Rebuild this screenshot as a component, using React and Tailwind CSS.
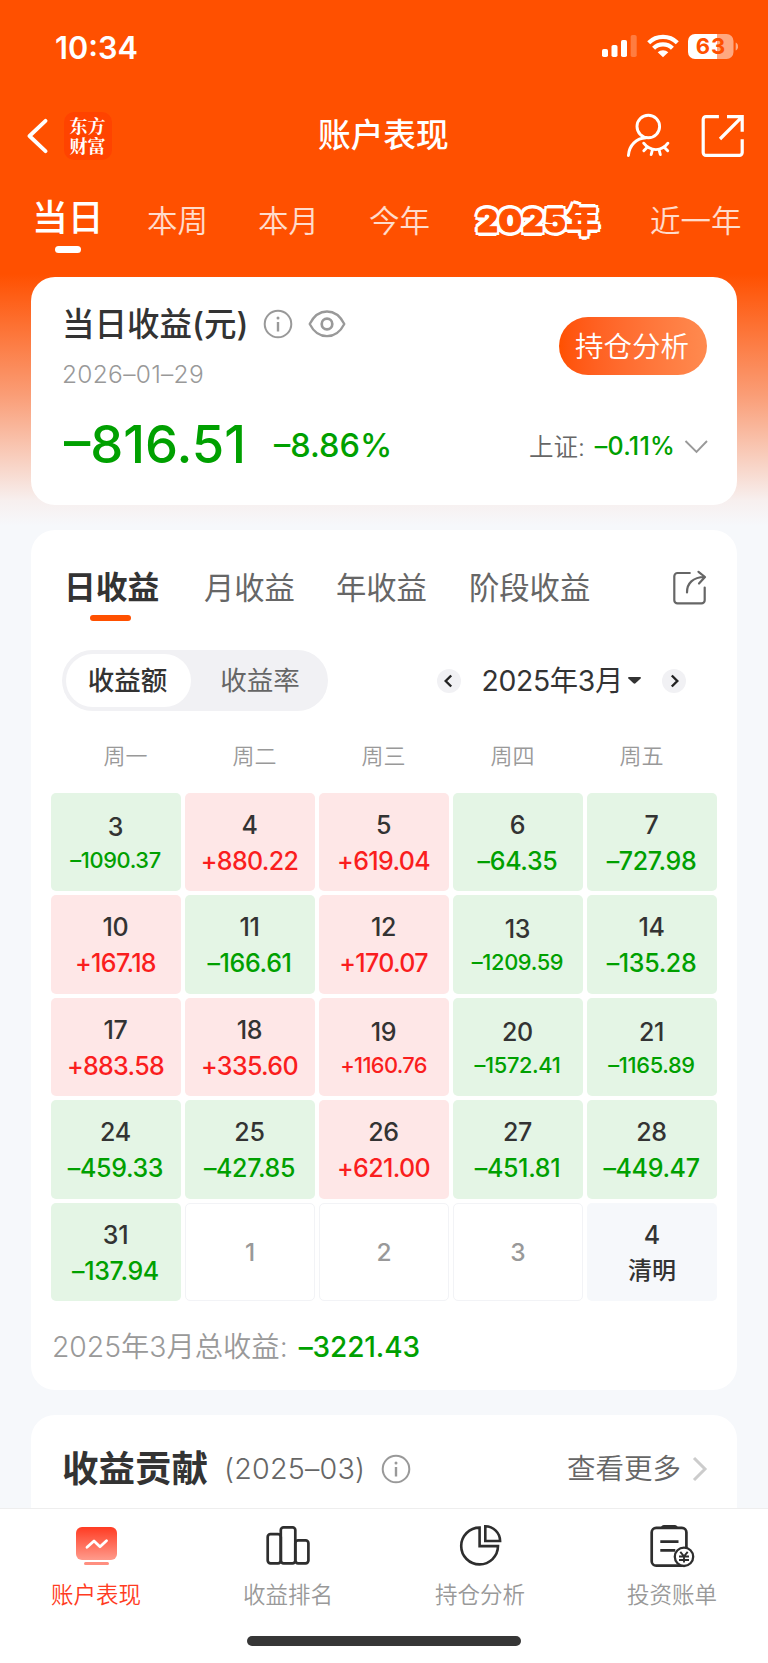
const TOP_TABS = [
  { label: '本周', box: 'w-[111px]' },
  { label: '本月', box: 'w-[111px]' },
  { label: '今年', box: 'w-[108px]' },
]

const WEEKDAYS = ['周一', '周二', '周三', '周四', '周五']

const DAYS = [
  { day: 3, value: '–1090.37' },
  { day: 4, value: '+880.22' },
  { day: 5, value: '+619.04' },
  { day: 6, value: '–64.35' },
  { day: 7, value: '–727.98' },
  { day: 10, value: '+167.18' },
  { day: 11, value: '–166.61' },
  { day: 12, value: '+170.07' },
  { day: 13, value: '–1209.59' },
  { day: 14, value: '–135.28' },
  { day: 17, value: '+883.58' },
  { day: 18, value: '+335.60' },
  { day: 19, value: '+1160.76' },
  { day: 20, value: '–1572.41' },
  { day: 21, value: '–1165.89' },
  { day: 24, value: '–459.33' },
  { day: 25, value: '–427.85' },
  { day: 26, value: '+621.00' },
  { day: 27, value: '–451.81' },
  { day: 28, value: '–449.47' },
  { day: 31, value: '–137.94' },
  { day: 1 },
  { day: 2 },
  { day: 3 },
  { day: 4, holiday: '清明' },
]

const StatusIcons = () => (
  <svg width="138" height="26" viewBox="0 0 138 26" fill="#fff">
    <rect x="2" y="15" width="6" height="8" rx="1.8"/>
    <rect x="11.5" y="11" width="6" height="12" rx="1.8"/>
    <rect x="21" y="6" width="6" height="17" rx="1.8"/>
    <rect x="30.7" y="1" width="6" height="22" rx="1.8" opacity="0.25"/>
    <g fill="none" stroke="#fff" strokeWidth="4.3">
      <path d="M48.7 8.700a20.500 20.500 0 0 1 28.600 0"/>
      <path d="M53.6 14.200a13.400 13.400 0 0 1 18.800 0"/>
    </g>
    <path d="M57.7 18.300a7.600 7.600 0 0 1 10.600 0L63 23.300z"/>
    <path d="M95 0h22v25H95a7 7 0 0 1-7-7V7a7 7 0 0 1 7-7z"/>
    <path d="M117 0h9.500a7 7 0 0 1 7 7v11a7 7 0 0 1-7 7H117z" opacity="0.5"/>
    <path d="M135.700 8.500c3.200 1.500 3.200 6.500 0 8z" opacity="0.5"/>
    <text x="110.9" y="20.4" textAnchor="middle" fill="#ff5000" fontSize="22" fontWeight="700" fontFamily="Inter, sans-serif" letterSpacing="0.8">63</text>
  </svg>
)

const BackIcon = () => (
  <svg width="22" height="38" viewBox="0 0 22 38" fill="none" stroke="#fff" strokeWidth="3.8" strokeLinecap="round" strokeLinejoin="round">
    <path d="M18.500 3.800L2.500 19l16 15.200"/>
  </svg>
)

const UserHiddenIcon = () => (
  <svg width="46" height="46" viewBox="0 0 46 46" fill="none" stroke="#fff" strokeWidth="2.9" strokeLinecap="round">
    <circle cx="23.3" cy="13.5" r="11.3"/>
    <path d="M3.400 42.500C4.200 32 11.500 25.300 21 24.800"/>
    <path d="M18.700 30.200c6.500 8.500 18 8.500 24.200 0"/>
    <path d="M22.500 34l-3.700 3.800M27.500 36.500l-1.300 5M34 36.500l1.300 5M39 34l3.700 3.800"/>
  </svg>
)

const OpenIcon = () => (
  <svg width="46" height="46" viewBox="0 0 46 46" fill="none" stroke="#fff" strokeWidth="3.2">
    <path d="M18.900 3.600H6a2.800 2.800 0 0 0-2.800 2.800v33.200A2.800 2.800 0 0 0 6 42.400h33.400a2.800 2.800 0 0 0 2.800-2.800V26.200"/>
    <path d="M27 3.600h15.200v15.200M41.500 4.300L20 26"/>
  </svg>
)

const InfoIcon = () => (
  <svg width="30" height="30" viewBox="0 0 30 30" fill="none" stroke="#999" strokeWidth="2">
    <circle cx="15" cy="15" r="13.3"/>
    <path d="M15 13v9.500" strokeWidth="2.4"/>
    <circle cx="15" cy="9" r="1.5" fill="#999" stroke="none"/>
  </svg>
)

const EyeIcon = () => (
  <svg width="38" height="30" viewBox="0 0 38 30" fill="none" stroke="#999" strokeWidth="2.3" strokeLinejoin="round">
    <path d="M1.700 15C5.500 7.500 11.500 2.500 19 2.500S32.500 7.500 36.300 15C32.500 22.500 26.500 27.200 19 27.200S5.500 22.500 1.700 15z"/>
    <circle cx="19" cy="15" r="5.3" strokeWidth="2.7"/>
  </svg>
)

const ShareIcon = () => (
  <svg width="34" height="36" viewBox="0 0 34 36" fill="none" stroke="#666" strokeWidth="2.2" strokeLinecap="round" strokeLinejoin="round">
    <path d="M16.800 3H4.500A3.200 3.200 0 0 0 1.300 6.200v24a3.200 3.200 0 0 0 3.200 3.200h24a3.200 3.200 0 0 0 3.200-3.200V17.500"/>
    <path d="M14 22.500C13.800 13.500 20 7 31.500 7M25.500 1.800l6.500 5.200-6 6.500"/>
  </svg>
)

const PerformanceIcon = () => (
  <svg width="48" height="48" viewBox="0 0 48 48" fill="none">
    <defs>
      <linearGradient id="perf" x1="0" y1="0" x2="0" y2="1">
        <stop offset="0" stopColor="#ff3b22"/>
        <stop offset="1" stopColor="#ff9b8c"/>
      </linearGradient>
    </defs>
    <rect x="4" y="5" width="41" height="33" rx="6" fill="url(#perf)"/>
    <rect x="12" y="40" width="25" height="3" rx="1.5" fill="#ff8f80"/>
    <path d="M15 25.300l7-6.300 6 5.700 6.500-6" stroke="#fff" strokeWidth="2.8" strokeLinecap="round" strokeLinejoin="round"/>
  </svg>
)

const RankIcon = () => (
  <svg width="48" height="48" viewBox="0 0 48 48" fill="none" stroke="#2e2e2e" strokeWidth="2.7">
    <rect x="3.7" y="12.2" width="13.1" height="29.2" rx="2.8"/>
    <rect x="16.8" y="5.3" width="14.5" height="36.1" rx="2.8"/>
    <rect x="31.3" y="18.4" width="13.1" height="23" rx="2.8"/>
  </svg>
)

const PieIcon = () => (
  <svg width="48" height="48" viewBox="0 0 48 48" fill="none" stroke="#2e2e2e" strokeWidth="2.6">
    <path d="M23.600 5.600A18.400 18.400 0 1 0 42 24.100H23.600z"/>
    <path d="M29.300 4.300V19H44.100A14.800 14.800 0 0 0 29.300 4.300z"/>
  </svg>
)

const BillIcon = () => (
  <svg width="48" height="48" viewBox="0 0 48 48" fill="none" stroke="#2e2e2e" strokeWidth="2.7">
    <rect x="3.7" y="5.8" width="34.7" height="37.9" rx="4.5"/>
    <path d="M12.500 6.500c.5-2.300 1.500-3.500 3.500-3.500h10.700c2 0 3 1.200 3.500 3.500z" fill="#2e2e2e" stroke="none"/>
    <path d="M12.300 19.700h18.200M12.300 28.300h15"/>
    <circle cx="36" cy="34.8" r="9.2" fill="#fff" strokeWidth="2.3"/>
    <path d="M32.300 29.800l3.700 4.500 3.700-4.500M36 34.500v6M31 34.500h10M31 38h10" strokeWidth="1.9"/>
  </svg>
)

const NAV = [
  { icon: <PerformanceIcon />, label: '账户表现', color: 'text-[#ff3b22]' },
  { icon: <RankIcon />, label: '收益排名', color: 'text-[#999]' },
  { icon: <PieIcon />, label: '持仓分析', color: 'text-[#999]' },
  { icon: <BillIcon />, label: '投资账单', color: 'text-[#999]' },
]

function DayCell({ day, value, holiday }) {
  if (holiday) {
    return (
      <div className="rounded-[5px] bg-[#f6f8fb] flex flex-col items-center text-[#333] font-medium">
        <span className="text-[25px] leading-[36px] mt-[14px]">{day}</span>
        <span className="text-[24px] leading-[34px] mt-px">{holiday}</span>
      </div>
    )
  }
  if (!value) {
    return (
      <div className="rounded-[5px] border border-[#f2f3f6] flex items-center justify-center pt-[2px] text-[24.5px] font-medium text-[#999]">
        {day}
      </div>
    )
  }
  const up = value.startsWith('+')
  const small = value.length > 7
  return (
    <div className={`rounded-[5px] flex flex-col items-center pr-px font-medium ${up ? 'bg-[#fee7e7]' : 'bg-[#e4f5e5]'}`}>
      <span className={`text-[25px] leading-[36px] tracking-[-0.3px] text-[#333] ${small ? 'mt-[16px]' : 'mt-[14px]'}`}>{day}</span>
      <span className={`whitespace-nowrap ${up ? 'text-[#fa1e1e] tracking-[-0.65px]' : 'text-[#00a000] tracking-[-0.35px]'} ${small ? 'text-[21.8px] leading-[30px]' : 'text-[25px] leading-[36px]'}`}>
        {value}
      </span>
    </div>
  )
}

export default function App() {
  return (
    <div className="w-[768px] h-[1663px] overflow-hidden flex flex-col bg-[#f6f8fb] font-['Inter','Noto_Sans_CJK_SC',sans-serif] whitespace-nowrap">
      <div className="h-[1508px] overflow-hidden bg-[linear-gradient(180deg,#ff5000_0px,#ff5000_274px,#fa9d76_395px,#f7efee_500px,#f6f8fb_526px)]">

        {/* Status bar */}
        <div className="h-[94px] pl-[55px] pr-[30px] flex items-center justify-between">
          <span className="pt-[2px] text-[30.7px] font-semibold text-white">10:34</span>
          <StatusIcons />
        </div>

        {/* Title bar */}
        <div className="h-[84px] pl-[27px] pr-[22px] flex items-center">
          <BackIcon />
          <div className="ml-[15px] w-12 h-12 rounded-[10px] bg-[#ff4300] flex items-center justify-center">
            <span className="w-[37px] pb-[2px] whitespace-normal break-all text-white text-[18px] leading-[20px] font-bold font-['Noto_Serif_CJK_SC','Noto_Sans_CJK_SC',serif]">东方财富</span>
          </div>
          <h1 className="flex-1 pl-[206px] text-[32.7px] font-medium text-white">账户表现</h1>
          <UserHiddenIcon />
          <div className="ml-[29px]"><OpenIcon /></div>
        </div>

        {/* Period tabs */}
        <div className="h-[99px] pl-[32px] flex items-start text-[30.5px] font-[350] text-white/80">
          <div className="w-[115px] flex flex-col">
            <span className="mt-[15px] h-[51px] leading-[50px] text-[35.8px] font-medium text-white">当日</span>
            <div className="ml-[23px] mt-[2px] w-[26px] h-[7px] rounded-full bg-white" />
          </div>
          {TOP_TABS.map(({ label, box }) => (
            <span key={label} className={`mt-[18px] leading-[50px] ${box}`}>{label}</span>
          ))}
          <span className="w-[173px] mt-[18px] leading-[50px] text-[32px] font-black text-[#ff5000] tracking-[1px] [-webkit-text-stroke:1.2px_#ff5000] [text-shadow:3.8px_0_#fff,-3.8px_0_#fff,0_3.8px_#fff,0_-3.8px_#fff,2.7px_2.7px_#fff,-2.7px_2.7px_#fff,2.7px_-2.7px_#fff,-2.7px_-2.7px_#fff]">2025年</span>
          <span className="mt-[18px] leading-[50px]">近一年</span>
        </div>

        {/* Today's result */}
        <section className="mx-[31px] h-[228px] rounded-[24px] bg-white pl-[31px] pr-[30px] flex justify-between">
          <div>
            <div className="mt-[22px] h-[50px] flex items-center text-[#333]">
              <h2 className="w-[186px] pt-[2px] text-[32.5px] font-medium">当日收益(元)</h2>
              <div className="ml-[15px]"><InfoIcon /></div>
              <div className="ml-[15px]"><EyeIcon /></div>
            </div>
            <p className="mt-[9px] leading-[32px] text-[24.5px] tracking-[0.3px] font-[350] text-[#999]">2026–01–29</p>
            <div className="mt-[20px] h-[66px] pl-[2px] flex items-center text-[#00a000] font-medium">
              <span className="w-[210px] pt-px text-[52.5px] leading-[66px]">–816.51</span>
              <span className="pt-[6px] text-[32.5px]">–8.86%</span>
            </div>
          </div>
          <div className="flex flex-col items-end">
            <button className="mt-[40px] w-[148px] h-[58px] pt-[2px] pr-[2px] rounded-full bg-linear-to-r from-[#ff5000] to-[#ff8a4f] text-[28.5px] font-[350] text-white">持仓分析</button>
            <div className="mt-[54px] -mr-px h-[36px] flex items-center text-[25px]">
              <span className="text-[#666] text-[24.5px] font-[350]">上证:</span>
              <span className="ml-[10px] text-[#00a000] font-medium tracking-[0.2px]">–0.11%</span>
              <svg width="24" height="16" viewBox="0 0 24 16" fill="none" stroke="#999" strokeWidth="1.9" className="ml-[9px]">
                <path d="M1.500 2l11 11 10.500-11"/>
              </svg>
            </div>
          </div>
        </section>

        {/* Calendar */}
        <section className="mx-[31px] mt-[25px] h-[860px] rounded-[24px] bg-white flex flex-col">
          <div className="h-[112px] pl-[34px] pr-[30px] flex items-start text-[30.3px] font-normal text-[#666]">
            <div className="-ml-px w-[140px] flex flex-col">
              <span className="mt-[33px] h-[50px] leading-[50px] text-[31.8px] font-bold text-[#333]">日收益</span>
              <div className="ml-[26px] mt-[2px] w-[41px] h-[6px] rounded-full bg-[#ff5000]" />
            </div>
            <span className="mt-[33px] w-[132px] leading-[50px]">月收益</span>
            <span className="mt-[33px] w-[133px] leading-[50px]">年收益</span>
            <span className="mt-[33px] leading-[50px]">阶段收益</span>
            <div className="ml-auto mt-[40px]"><ShareIcon /></div>
          </div>

          <div className="mt-2 h-[61px] pl-[31px] pr-[51px] flex items-center justify-between">
            <div className="w-[266px] h-[61px] rounded-full bg-[#f1f1f4] p-1 flex items-center text-[26.5px]">
              <span className="w-[125px] h-[53px] pt-px pr-[2px] rounded-full bg-white flex items-center justify-center font-medium text-[#333]">收益额</span>
              <span className="flex-1 pt-px pl-[5px] text-center text-[#666]">收益率</span>
            </div>
            <div className="flex items-center">
              <svg width="24" height="24" viewBox="0 0 24 24" fill="none" stroke="#222" strokeWidth="2.4">
                <circle cx="12" cy="12" r="12" fill="#f1f1f4" stroke="none"/>
                <path d="M14.200 6.500L8.700 12l5.500 5.500"/>
              </svg>
              <span className="ml-[20px] pt-px text-[28.3px] tracking-[-0.3px] text-[#333]">2025年3月</span>
              <svg width="13" height="7" viewBox="0 0 13 7" fill="#333" className="ml-[5px]">
                <path d="M1 0h11c1 0 1.200.8.600 1.400L7.500 6.300a1.500 1.500 0 0 1-2 0L.400 1.400C-.2.800 0 0 1 0z"/>
              </svg>
              <svg width="24" height="24" viewBox="0 0 24 24" fill="none" stroke="#222" strokeWidth="2.4" className="ml-[21px]">
                <circle cx="12" cy="12" r="12" fill="#f1f1f4" stroke="none"/>
                <path d="M9.800 6.500l5.500 5.500-5.500 5.500"/>
              </svg>
            </div>
          </div>

          <div className="mt-[25px] h-[40px] ml-[30px] mr-[31px] grid grid-cols-5 items-center text-center text-[22px] font-[350] text-[#999]">
            {WEEKDAYS.map((d) => <span key={d}>{d}</span>)}
          </div>

          <div className="mt-[17px] h-[508px] mx-[20px] grid grid-cols-5 grid-rows-5 gap-1">
            {DAYS.map((d, i) => <DayCell key={i} {...d} />)}
          </div>

          <div className="mt-[26px] h-[40px] pl-[21px] flex items-center text-[28.3px]">
            <span className="font-[350] text-[#999]">2025年3月总收益:</span>
            <span className="ml-[11px] text-[28px] tracking-[-0.1px] font-medium text-[#00a000]">–3221.43</span>
          </div>
        </section>

        {/* Contribution */}
        <section className="mx-[31px] mt-[25px] h-[140px] rounded-t-[24px] bg-white pl-[31px] pr-[29px]">
          <div className="h-[107px] flex items-center text-[28.7px] text-[#666]">
            <h2 className="w-[162px] pt-[2px] text-[36.5px] font-bold text-[#333]">收益贡献</h2>
            <span className="font-[350] tracking-[0.2px]">(2025–03)</span>
            <div className="ml-[16px]"><InfoIcon /></div>
            <span className="ml-auto pt-[2px] text-[28.5px] font-[350]">查看更多</span>
            <svg width="16" height="26" viewBox="0 0 16 26" fill="none" stroke="#ccc" strokeWidth="3" className="ml-[11px]">
              <path d="M2 2l11 11L2 24"/>
            </svg>
          </div>
        </section>
      </div>

      {/* Bottom navigation */}
      <nav className="h-[155px] bg-white border-t border-[#eee]">
        <div className="h-[127px] grid grid-cols-4">
          {NAV.map(({ icon, label, color }) => (
            <div key={label} className="flex flex-col items-center pt-[13px]">
              {icon}
              <span className={`mt-[8px] text-[22.5px] leading-[34px] font-[350] ${color}`}>{label}</span>
            </div>
          ))}
        </div>
        <div className="mx-auto w-[274px] h-[10px] rounded-full bg-[#363636]" />
      </nav>
    </div>
  )
}
